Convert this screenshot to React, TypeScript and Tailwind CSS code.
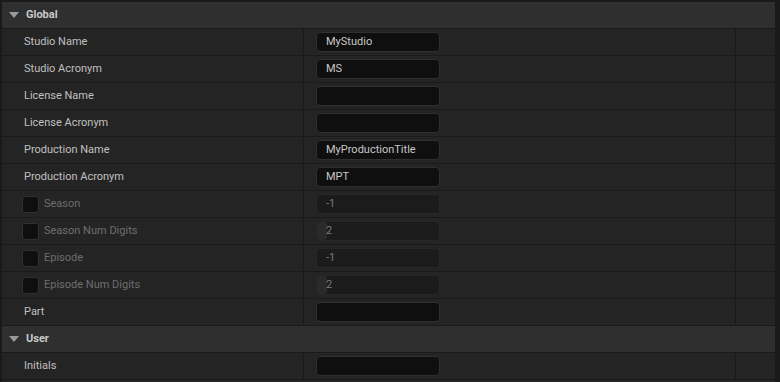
type Row = {
  label: string
  value: string
  optional?: boolean
  spin?: boolean
}

const globalRows: Row[] = [
  { label: 'Studio Name', value: 'MyStudio' },
  { label: 'Studio Acronym', value: 'MS' },
  { label: 'License Name', value: '' },
  { label: 'License Acronym', value: '' },
  { label: 'Production Name', value: 'MyProductionTitle' },
  { label: 'Production Acronym', value: 'MPT' },
  { label: 'Season', value: '-1', optional: true },
  { label: 'Season Num Digits', value: '2', optional: true, spin: true },
  { label: 'Episode', value: '-1', optional: true },
  { label: 'Episode Num Digits', value: '2', optional: true, spin: true },
  { label: 'Part', value: '' },
]

const userRows: Row[] = [{ label: 'Initials', value: '' }]

function CategoryHeader({ title }: { title: string }) {
  return (
    <div className="flex h-[27px] items-center border-b border-[#1a1a1a] bg-[#2f2f2f]">
      <svg width="10" height="6" viewBox="0 0 10 6" className="ml-[7px] mr-[7px]">
        <polygon points="0,0 10,0 5,6" fill="#9a9a9a" />
      </svg>
      <span className="text-[11px] font-bold text-[#c8c8c8]">{title}</span>
    </div>
  )
}

function ValueBox({ row }: { row: Row }) {
  if (row.optional) {
    return (
      <div className="relative flex h-[20px] w-[124px] items-center overflow-hidden rounded-[4px] border border-[#272727] bg-[#1b1b1b]">
        {row.spin && <div className="absolute left-0 top-0 h-full w-[10px] rounded-[3px] bg-[#2a2a2a]" />}
        <span className="relative pl-[9px] text-[11px] text-[#7a7a7a]">{row.value}</span>
      </div>
    )
  }
  return (
    <div className="flex h-[20px] w-[124px] items-center rounded-[4px] border border-[#2f2f2f] bg-[#0f0f0f]">
      <span className="pl-[9px] text-[11px] text-[#c8c8c8]">{row.value}</span>
    </div>
  )
}

function PropertyRow({ row }: { row: Row }) {
  return (
    <div className="flex h-[27px] border-b border-[#1a1a1a] bg-[#242424]">
      <div className="flex w-[302px] items-center border-r border-[#1a1a1a]">
        {row.optional ? (
          <>
            <div className="ml-[20px] h-[17px] w-[17px] rounded-[3px] border border-[#303030] bg-[#0f0f0f]" />
            <span className="ml-[5px] text-[11px] text-[#6e6e6e]">{row.label}</span>
          </>
        ) : (
          <span className="ml-[22px] text-[11px] text-[#c0c0c0]">{row.label}</span>
        )}
      </div>
      <div className="flex w-[432px] items-center border-r border-[#1a1a1a] pl-[12px]">
        <ValueBox row={row} />
      </div>
      <div className="flex-1" />
    </div>
  )
}

export default function App() {
  return (
    <div
      className="h-[382px] w-[780px] overflow-hidden bg-[#1a1a1a] pl-[2px] pr-[5px] pt-[2px]"
      style={{ fontFamily: 'Roboto, "Liberation Sans", sans-serif' }}
    >
      <CategoryHeader title="Global" />
      {globalRows.map((row) => (
        <PropertyRow key={row.label} row={row} />
      ))}
      <CategoryHeader title="User" />
      {userRows.map((row) => (
        <PropertyRow key={row.label} row={row} />
      ))}
      <div className="h-[27px] bg-[#242424]" />
    </div>
  )
}
